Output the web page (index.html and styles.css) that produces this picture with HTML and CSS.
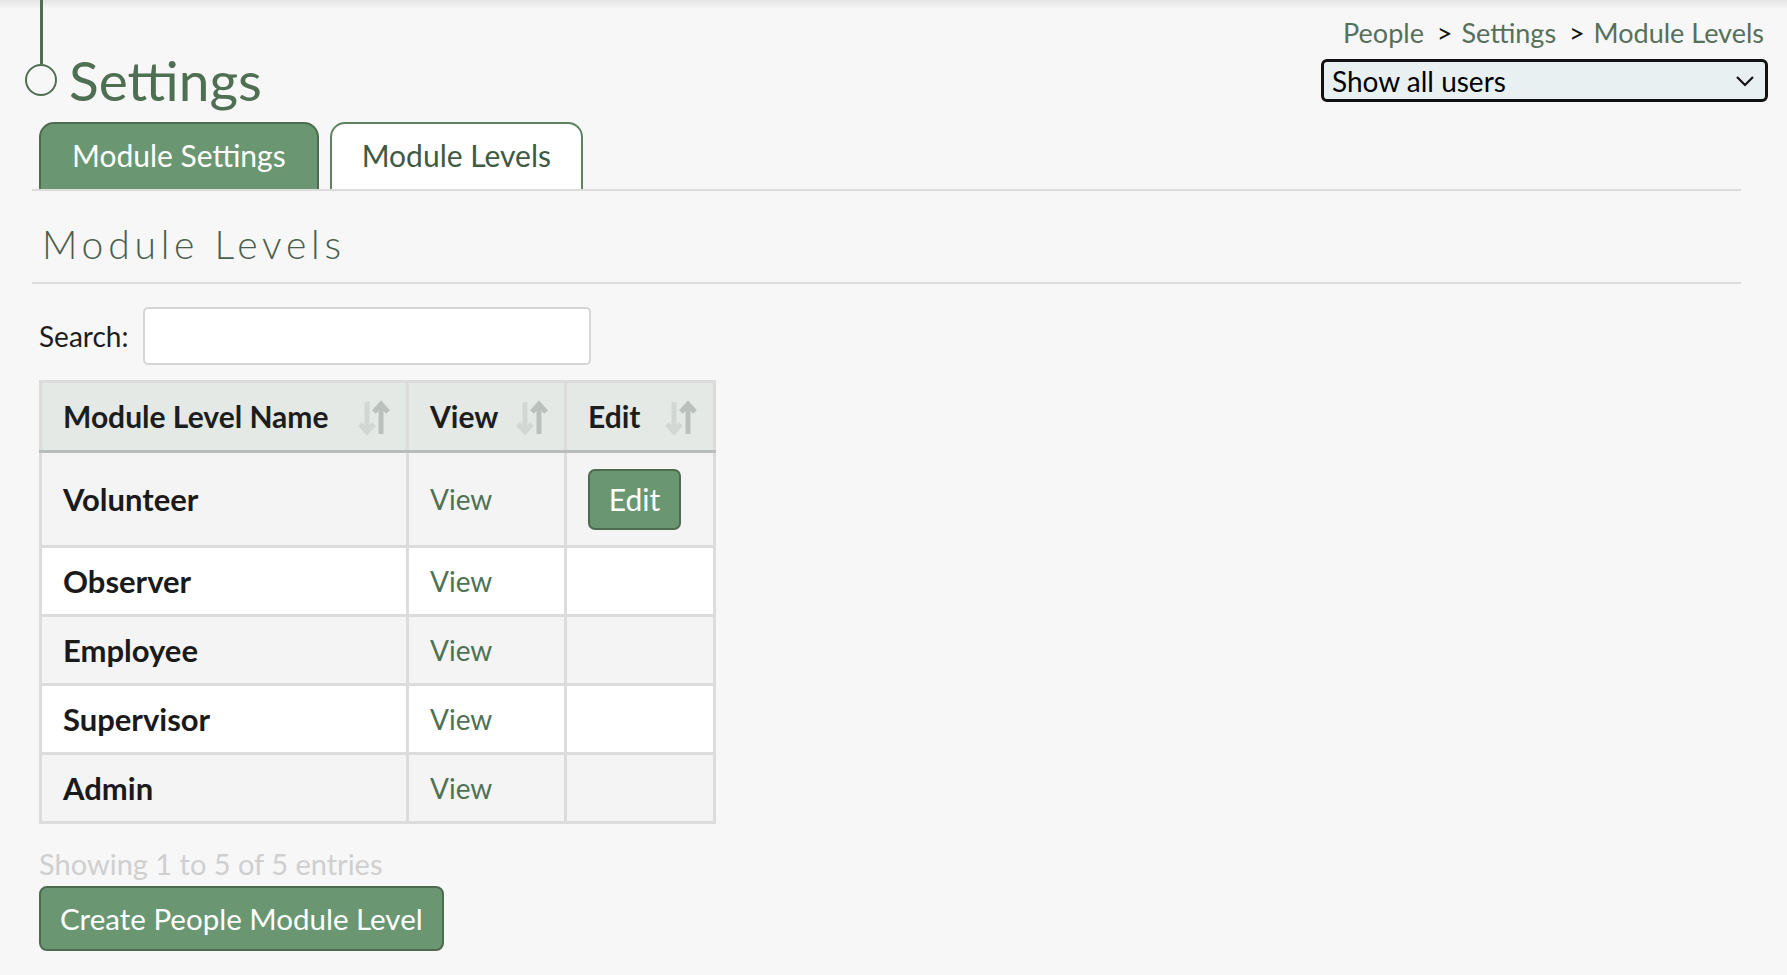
FILE: index.html
```html
<!DOCTYPE html>
<html lang="en">
<head>
  <meta charset="UTF-8" />
  <meta name="viewport" content="width=device-width, initial-scale=1.0"/>
  <title>Settings - Module Levels</title>
  <link rel="stylesheet" href="styles.css">
</head>
<body>

  <div class="page">

    <!-- HEADER -->
    <div class="page-head">
      <div class="title-wrap">
        <span class="title-dot"></span>
        <h1>Settings</h1>
      </div>
      <div class="head-right">
        <div class="crumbs">
          <a href="#">People</a>
          <span class="sep">&gt;</span>
          <a href="#">Settings</a>
          <span class="sep">&gt;</span>
          <a href="#">Module Levels</a>
        </div>
        <div class="user-filter">
          <select>
            <option>Show all users</option>
            <option>Show active users</option>
          </select>
          <svg class="chev" width="20" height="12" viewBox="0 0 20 12"><path d="M2 2 L10 10 L18 2" fill="none" stroke="#111" stroke-width="2.2"/></svg>
        </div>
      </div>
    </div>

    <!-- TABS -->
    <div class="tabs">
      <a href="#" class="tab active">Module Settings</a>
      <a href="#" class="tab">Module Levels</a>
    </div>

    <h2 class="section-title">Module Levels</h2>

    <div class="search-row">
      <label for="search">Search:</label>
      <input id="search" type="text" />
    </div>

    <table class="levels">
      <thead>
        <tr>
          <th class="col-name">Module Level Name <span class="sort"><svg width="32" height="36" viewBox="0 0 32 36"><path d="M9 2 V31 M2 24 L9 32 L16 24" fill="none" stroke="#d2d7d3" stroke-width="5"/><path d="M23 34 V5 M16 12 L23 4 L30 12" fill="none" stroke="#bac1bc" stroke-width="5"/></svg></span></th>
          <th class="col-view">View <span class="sort"><svg width="32" height="36" viewBox="0 0 32 36"><path d="M9 2 V31 M2 24 L9 32 L16 24" fill="none" stroke="#d2d7d3" stroke-width="5"/><path d="M23 34 V5 M16 12 L23 4 L30 12" fill="none" stroke="#bac1bc" stroke-width="5"/></svg></span></th>
          <th class="col-edit">Edit <span class="sort"><svg width="32" height="36" viewBox="0 0 32 36"><path d="M9 2 V31 M2 24 L9 32 L16 24" fill="none" stroke="#d2d7d3" stroke-width="5"/><path d="M23 34 V5 M16 12 L23 4 L30 12" fill="none" stroke="#bac1bc" stroke-width="5"/></svg></span></th>
        </tr>
      </thead>
      <tbody>
        <tr class="tall">
          <td class="name">Volunteer</td>
          <td><a href="#">View</a></td>
          <td><a href="#" class="btn btn-edit">Edit</a></td>
        </tr>
        <tr>
          <td class="name">Observer</td>
          <td><a href="#">View</a></td>
          <td></td>
        </tr>
        <tr>
          <td class="name">Employee</td>
          <td><a href="#">View</a></td>
          <td></td>
        </tr>
        <tr>
          <td class="name">Supervisor</td>
          <td><a href="#">View</a></td>
          <td></td>
        </tr>
        <tr>
          <td class="name">Admin</td>
          <td><a href="#">View</a></td>
          <td></td>
        </tr>
      </tbody>
    </table>

    <div class="table-info">Showing 1 to 5 of 5 entries</div>
    <a href="#" class="btn btn-create">Create People Module Level</a>

  </div>

</body>
</html>
```

FILE: styles.css
```css
body {
  font-family: 'Lato', sans-serif;
  margin: 0;
  background: linear-gradient(#e4e4e4, #f7f7f7 9px) no-repeat, #f7f7f7;
  color: #1d1d1d;
  min-height: 975px;
}

a {
  text-decoration: none;
}

.page {
  padding: 0 23px 0 39px;
}

/* Kopf */
.page-head {
  display: flex;
  justify-content: space-between;
  align-items: flex-start;
}

.title-wrap {
  display: flex;
  align-items: center;
  margin-left: -14px;
  padding-top: 49px;
}

.title-dot {
  position: relative;
  width: 28px;
  height: 28px;
  border: 2px solid #4f6f52;
  border-radius: 50%;
  margin-right: 12px;
}

.title-dot::before {
  content: "";
  position: absolute;
  left: 13px;
  bottom: 30px;
  width: 3px;
  height: 70px;
  background: #4f6f52;
}

h1 {
  margin: 0;
  font-size: 55px;
  font-weight: 400;
  line-height: 62px;
  color: #4f6f52;
}

.head-right {
  display: flex;
  flex-direction: column;
  align-items: flex-end;
  padding-top: 16px;
}

.crumbs {
  font-size: 27px;
  line-height: 34px;
  color: #111;
}

.crumbs a {
  color: #56705a;
}

.crumbs .sep {
  margin: 0 2px 0 6px;
}

.user-filter {
  position: relative;
  margin-top: 9px;
  margin-right: -4px;
}

.user-filter select {
  appearance: none;
  -webkit-appearance: none;
  display: block;
  width: 447px;
  height: 43px;
  padding: 0 8px;
  font-family: 'Lato', sans-serif;
  font-size: 28px;
  color: #000;
  background: #e9f0f2;
  border: 3px solid #111;
  border-radius: 6px;
}

.user-filter .chev {
  position: absolute;
  right: 13px;
  top: 16px;
  pointer-events: none;
}

/* Faner */
.tabs {
  display: flex;
  gap: 11px;
  margin-top: 11px;
  margin-right: 23px;
  border-bottom: 2px solid #dcdcdc;
  position: relative;
}

.tabs::before {
  content: "";
  position: absolute;
  left: -7px;
  bottom: -2px;
  width: 7px;
  height: 2px;
  background: #dcdcdc;
}

.tab {
  display: block;
  height: 67px;
  box-sizing: border-box;
  padding: 0 30px;
  font-size: 30px;
  line-height: 62px;
  border: 2px solid #5e8262;
  border-bottom: none;
  border-radius: 15px 15px 0 0;
  background: #fff;
  color: #3f5a43;
}

.tab.active {
  background: #6a9771;
  border-color: #4e6b50;
  color: #fff;
  padding: 0 31px;
}

.section-title {
  margin: 0 23px 0 -7px;
  padding: 27px 0 12px 10px;
  font-size: 39px;
  font-weight: 300;
  letter-spacing: 4.8px;
  line-height: 52px;
  color: #4a5e4c;
  border-bottom: 2px solid #dcdcdc;
}

/* Søk */
.search-row {
  display: flex;
  align-items: center;
  gap: 15px;
  margin-top: 23px;
}

.search-row label {
  font-size: 28px;
  color: #1d1d1d;
}

.search-row input {
  width: 448px;
  height: 58px;
  box-sizing: border-box;
  border: 2px solid #d6d6d6;
  border-radius: 5px;
  background: #fff;
}

/* Tabell */
.levels {
  margin-top: 15px;
  border-collapse: collapse;
  border: 3px solid #dcdcdc;
  font-size: 28px;
}

.levels th,
.levels td {
  border: 3px solid #dcdcdc;
  padding: 0 16px 0 21px;
  text-align: left;
  height: 66px;
}

.levels th {
  background: #e4e9e6;
  font-weight: 700;
  font-size: 30px;
  height: 67px;
  border-bottom-color: #b9bcba;
  white-space: nowrap;
}

.levels .col-name { width: 327px; }
.levels .col-view { width: 118px; }
.levels .col-edit { width: 109px; }

.sort {
  float: right;
  margin-top: 2px;
  height: 36px;
}

.levels tbody tr:nth-child(odd) td {
  background: #f4f4f4;
}

.levels tbody tr:nth-child(even) td {
  background: #fff;
}

.levels tr.tall td {
  height: 92px;
}

.levels td.name {
  font-weight: 700;
  font-size: 31px;
  color: #1a1a1a;
}

.levels td a {
  color: #4e7253;
}

.btn {
  display: inline-block;
  background: #6a9771;
  color: #fff;
  border: 2px solid #4e6b50;
  box-sizing: border-box;
}

.levels td a.btn-edit {
  color: #fff;
  font-size: 30px;
  width: 93px;
  height: 61px;
  line-height: 57px;
  text-align: center;
  border-radius: 7px;
}

.table-info {
  margin-top: 22px;
  font-size: 29px;
  color: #cfcfcf;
}

.btn-create {
  margin-top: 5px;
  padding: 0 19px;
  height: 65px;
  line-height: 61px;
  font-size: 29.5px;
  border-radius: 8px;
}
```
